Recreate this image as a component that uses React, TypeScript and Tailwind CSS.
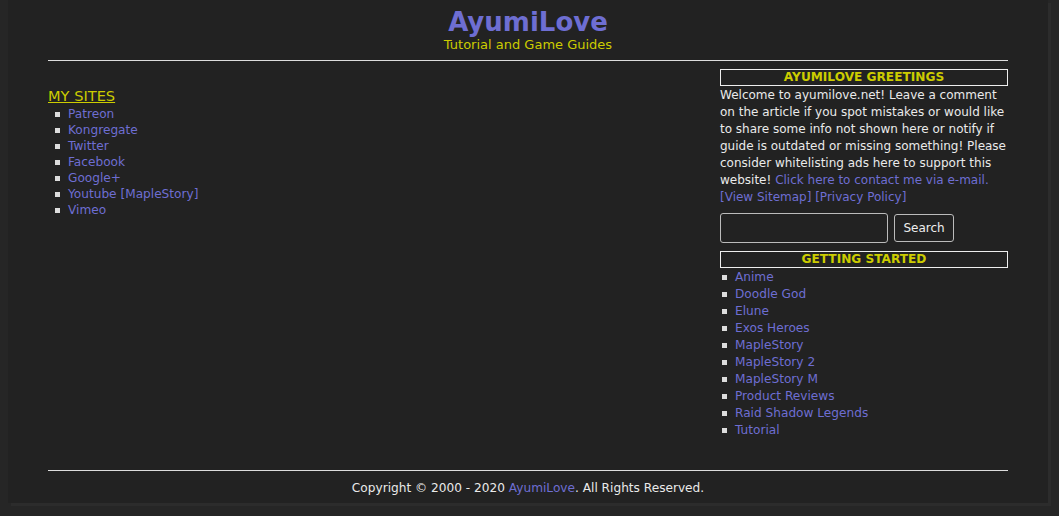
const sites = ["Patreon", "Kongregate", "Twitter", "Facebook", "Google+", "Youtube [MapleStory]", "Vimeo"];

const started = [
  "Anime",
  "Doodle God",
  "Elune",
  "Exos Heroes",
  "MapleStory",
  "MapleStory 2",
  "MapleStory M",
  "Product Reviews",
  "Raid Shadow Legends",
  "Tutorial",
];

function Bullet() {
  return <span className="mr-[8px] inline-block h-[5px] w-[5px] shrink-0 bg-[#ddd]" />;
}

export default function App() {
  return (
    <div className="min-h-[516px] bg-[#262626] font-['DejaVu_Sans',Verdana,sans-serif] text-[12.15px] text-[#eaeaea]">
      <div className="ml-[8px] h-[503px] w-[1040px] bg-[#222] px-[40px] shadow-[3px_3px_0_#2c2c2c]">
        {/* header */}
        <header className="pt-[6px] text-center">
          <h1 className="text-[26px] font-bold leading-[32px] text-[#6e6ed2]">AyumiLove</h1>
          <p className="text-[13px] leading-[14px] text-[#cccc00]">Tutorial and Game Guides</p>
        </header>
        <div className="mt-[8px] h-px bg-[#ddd]" />

        <div className="flex h-[409px] justify-between">
          <div className="pt-[26px]">
            <a className="text-[14.6px] leading-[18px] text-[#cccc00] underline">MY SITES</a>
            <ul className="pl-[7px]">
              {sites.map((s) => (
                <li key={s} className="flex items-center leading-[16px]">
                  <Bullet />
                  <a className="text-[#6e6ed2]">{s}</a>
                </li>
              ))}
            </ul>
          </div>

          <div className="w-[288px] pt-[8px]">
            <div className="border border-[#eee] text-center font-bold leading-[15px] text-[#cccc00]">
              AYUMILOVE GREETINGS
            </div>
            <p className="mt-px mr-[-4px] text-[12px] leading-[17px]">
              Welcome to ayumilove.net! Leave a comment on the article if you spot mistakes or would like to share some
              info not shown here or notify if guide is outdated or missing something! Please consider whitelisting ads
              here to support this website! <a className="text-[#6e6ed2]">Click here to contact me via e-mail.</a>{" "}
              <a className="text-[#6e6ed2]">[View Sitemap]</a> <a className="text-[#6e6ed2]">[Privacy Policy]</a>
            </p>
            <div className="mt-[7px] flex items-center gap-[6px]">
              <input className="h-[30px] w-[168px] rounded-[3px] border border-[#bbb] bg-[#222]" />
              <button className="h-[28px] w-[60px] rounded-[3px] border border-[#bbb] bg-[#222] text-[12px] text-[#eee]">
                Search
              </button>
            </div>
            <div className="mt-[8px] border border-[#eee] text-center font-bold leading-[15px] text-[#cccc00]">
              GETTING STARTED
            </div>
            <ul className="pt-px">
              {started.map((s) => (
                <li key={s} className="flex items-center pl-[2px] leading-[17px]">
                  <Bullet />
                  <a className="text-[#6e6ed2]">{s}</a>
                </li>
              ))}
            </ul>
          </div>
        </div>

        <div className="h-px bg-[#ddd]" />
        <footer className="pt-[9px] text-center leading-[16px]">
          Copyright © 2000 - 2020 <a className="text-[#6e6ed2]">AyumiLove</a>. All Rights Reserved.
        </footer>
      </div>
    </div>
  );
}
